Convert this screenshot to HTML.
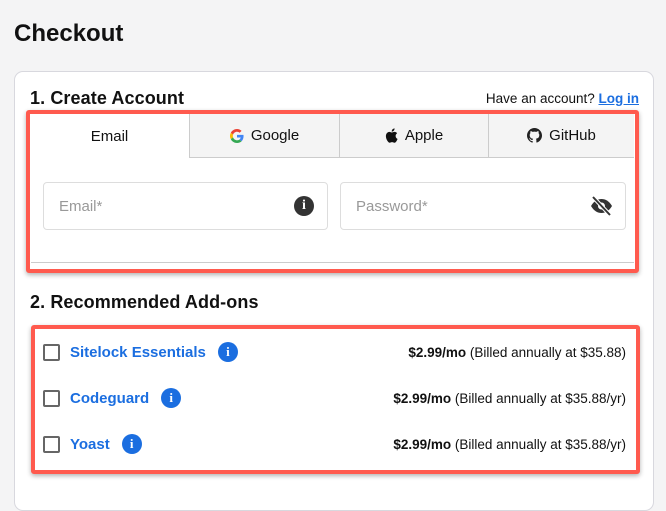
<!DOCTYPE html>
<html><head><style>
*{box-sizing:border-box;margin:0;padding:0}
body{width:666px;height:496px;background:#f4f4f5;font-family:"Liberation Sans",sans-serif;position:relative;overflow:hidden;color:#111}
.abs{position:absolute}
h1{position:absolute;left:14px;top:20px;font-size:24px;font-weight:bold}
.card{left:14px;top:71px;width:640px;height:440px;background:#fff;border:1px solid #d8d8de;border-radius:9px}
.h2{font-size:18px;font-weight:bold;letter-spacing:.1px}
.red{border:4px solid #ff5a4e;border-radius:3px;box-shadow:0 2px 5px rgba(0,0,0,.3);background:#fff}
.tab{top:114px;height:44px;background:#f4f4f4;border-left:1px solid #ccc;border-bottom:1px solid #ccc;font-size:15px;display:flex;align-items:center;justify-content:center;gap:7px}
.inp{height:48px;border:1px solid #ddd;border-radius:4px;font-size:15px;color:#999;padding:15px 15px}
.row{left:43px;width:583px;height:24px;display:flex;align-items:center;font-size:14px}
.cb{width:17px;height:17px;border:2px solid #666;border-radius:2px;margin-right:10px}
.nm{color:#1b6ee0;font-weight:bold;font-size:15px}
.info{width:20px;height:20px;border-radius:50%;background:#1b6ee0;color:#fff;font-weight:bold;font-size:13px;text-align:center;line-height:20px;margin-left:12px;font-family:"Liberation Serif",serif}
.pr{margin-left:auto;font-size:13.5px}
</style></head><body>
<h1>Checkout</h1>
<div class="abs card"></div>
<div class="abs h2" style="left:30px;top:88px">1. Create Account</div>
<div class="abs" style="right:27px;top:91px;font-size:13.5px">Have an account? <span style="color:#1b6ee0;font-weight:bold;text-decoration:underline">Log in</span></div>
<div class="abs red" style="left:26px;top:110px;width:613px;height:163px"></div>
<div class="abs" style="left:31px;top:262px;width:603px;border-top:1px solid #ccc"></div>
<div class="abs" style="left:30px;top:114px;width:159px;height:44px;font-size:15px;display:flex;align-items:center;justify-content:center">Email</div>
<div class="abs tab" style="left:189px;width:150px"><svg width="14" height="14" viewBox="0 0 48 48"><path fill="#EA4335" d="M24 9.5c3.5 0 6.6 1.2 9 3.5l6.7-6.7C35.6 2.4 30.2 0 24 0 14.6 0 6.6 5.4 2.7 13.3l7.8 6C12.4 13.7 17.7 9.5 24 9.5z"/><path fill="#4285F4" d="M46.5 24.5c0-1.6-.1-3.1-.4-4.5H24v9h12.7c-.6 2.9-2.2 5.4-4.7 7.1l7.6 5.9c4.4-4.1 6.9-10.1 6.9-17.5z"/><path fill="#FBBC05" d="M10.5 28.7c-.5-1.4-.8-3-.8-4.7s.3-3.3.8-4.7l-7.8-6C1 16.6 0 20.2 0 24s1 7.4 2.7 10.7l7.8-6z"/><path fill="#34A853" d="M24 48c6.5 0 11.9-2.1 15.9-5.8l-7.6-5.9c-2.1 1.4-4.9 2.3-8.3 2.3-6.3 0-11.6-4.2-13.5-9.9l-7.8 6C6.6 42.6 14.6 48 24 48z"/></svg>Google</div>
<div class="abs tab" style="left:339px;width:149px"><svg width="13" height="15" viewBox="0 0 24 28"><path fill="#111" d="M19.7 14.9c0-3.4 2.8-5 2.9-5.1-1.6-2.3-4-2.6-4.9-2.6-2.1-.2-4 1.2-5.1 1.2s-2.7-1.2-4.4-1.2C5.900 7.300 3.800 8.600 2.700 10.600c-2.400 4.100-.6 10.200 1.700 13.500 1.100 1.600 2.500 3.500 4.200 3.400 1.700-.1 2.300-1.100 4.400-1.100s2.600 1.100 4.400 1.100c1.800 0 3-1.700 4.100-3.300 1.300-1.900 1.800-3.700 1.900-3.800-.1 0-3.600-1.400-3.700-5.500zM16.300 4.900C17.200 3.800 17.900 2.200 17.700.6c-1.300.1-3 .9-3.900 2-.9 1-1.600 2.600-1.400 4.100 1.500.1 3-.7 3.900-1.800z"/></svg>Apple</div>
<div class="abs tab" style="left:488px;width:146px"><svg width="15" height="15" viewBox="0 0 16 16"><path fill="#222" d="M8 0C3.6 0 0 3.600 0 8c0 3.500 2.300 6.500 5.500 7.600.4.100.5-.2.5-.4v-1.400c-2.200.5-2.700-1-2.700-1-.4-.9-.9-1.200-.9-1.200-.7-.5.1-.5.1-.5.8.1 1.200.8 1.200.8.7 1.200 1.900.9 2.300.7.1-.5.3-.9.5-1.100-1.800-.2-3.600-.9-3.600-4 0-.9.3-1.600.8-2.100-.1-.2-.4-1 .1-2.100 0 0 .7-.2 2.200.8.6-.2 1.300-.3 2-.3s1.400.1 2 .3c1.500-1 2.200-.8 2.200-.8.4 1.100.2 1.900.1 2.100.5.6.8 1.300.8 2.100 0 3.100-1.900 3.700-3.600 3.900.3.300.5.800.5 1.500v2.200c0 .2.100.5.6.4C13.700 14.500 16 11.500 16 8c0-4.400-3.600-8-8-8z"/></svg>GitHub</div>
<div class="abs inp" style="left:43px;top:182px;width:285px">Email*</div>
<div class="abs" style="left:294px;top:196px;width:20px;height:20px;border-radius:50%;background:#333;color:#fff;font-weight:bold;font-size:14px;text-align:center;line-height:20px;font-family:'Liberation Serif',serif">i</div>
<div class="abs inp" style="left:340px;top:182px;width:286px">Password*</div>
<svg class="abs" style="left:590px;top:196px" width="23" height="20" viewBox="0 0 23 20"><path d="M1 10c3-5 6.5-7 10.5-7s7.5 2 10.5 7c-3 5-6.5 7-10.5 7S4 15 1 10z" fill="#333"/><circle cx="11.5" cy="10" r="3.5" fill="#fff"/><line x1="3" y1="1" x2="20" y2="19" stroke="#fff" stroke-width="4"/><line x1="3" y1="1" x2="20" y2="19" stroke="#333" stroke-width="2"/></svg>
<div class="abs h2" style="left:30px;top:292px">2. Recommended Add-ons</div>
<div class="abs red" style="left:31px;top:325px;width:609px;height:149px"></div>
<div class="abs row" style="top:340px"><div class="cb"></div><span class="nm">Sitelock Essentials</span><div class="info">i</div><span class="pr"><b>$2.99/mo</b> (Billed annually at $35.88)</span></div>
<div class="abs row" style="top:386px"><div class="cb"></div><span class="nm">Codeguard</span><div class="info">i</div><span class="pr"><b>$2.99/mo</b> (Billed annually at $35.88/yr)</span></div>
<div class="abs row" style="top:432px"><div class="cb"></div><span class="nm">Yoast</span><div class="info">i</div><span class="pr"><b>$2.99/mo</b> (Billed annually at $35.88/yr)</span></div>
</body></html>
